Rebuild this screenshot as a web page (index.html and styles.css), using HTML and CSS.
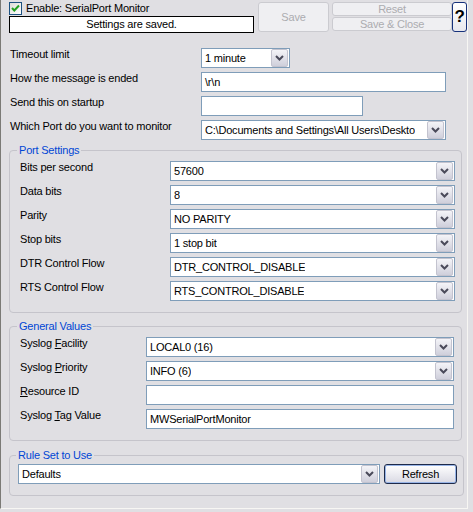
FILE: index.html
```html
<!DOCTYPE html>
<html>
<head>
<meta charset="utf-8">
<link rel="stylesheet" href="styles.css">
</head>
<body>
<div class="frame">
  <div class="top">
    <div class="status-col">
      <label class="check-row">
        <span class="checkbox">
          <svg width="11" height="11" viewBox="0 0 11 11"><path d="M2 5 L4.3 7.5 L9 2.5" fill="none" stroke="#21a121" stroke-width="2"/></svg>
        </span>
        <span>Enable: SerialPort Monitor</span>
      </label>
      <div class="status">Settings are saved.</div>
    </div>
    <div class="btn btn-disabled btn-save">Save</div>
    <div class="btn-stack">
      <div class="btn btn-disabled btn-small">Reset</div>
      <div class="btn btn-disabled btn-small">Save &amp; Close</div>
    </div>
    <div class="btn btn-help">?</div>
  </div>

  <div class="main">
    <div class="row row-top">
      <span class="label label-top">Timeout limit</span>
      <div class="combo w-timeout"><span class="val">1 minute</span><span class="drop"><svg width="9" height="6" viewBox="0 0 9 6"><path d="M1 1 L4.5 4.5 L8 1" fill="none" stroke="#4a4a5a" stroke-width="2"/></svg></span></div>
    </div>
    <div class="row row-top">
      <span class="label label-top">How the message is ended</span>
      <div class="field w-wide">\r\n</div>
    </div>
    <div class="row row-top">
      <span class="label label-top">Send this on startup</span>
      <div class="field w-startup"></div>
    </div>
    <div class="row row-top">
      <span class="label label-top">Which Port do you want to monitor</span>
      <div class="combo w-wide"><span class="val">C:\Documents and Settings\All Users\Deskto</span><span class="drop"><svg width="9" height="6" viewBox="0 0 9 6"><path d="M1 1 L4.5 4.5 L8 1" fill="none" stroke="#4a4a5a" stroke-width="2"/></svg></span></div>
    </div>

    <fieldset class="group group-port">
      <legend>Port Settings</legend>
      <div class="row">
        <span class="label label-port">Bits per second</span>
        <div class="combo w-port"><span class="val">57600</span><span class="drop"><svg width="9" height="6" viewBox="0 0 9 6"><path d="M1 1 L4.5 4.5 L8 1" fill="none" stroke="#4a4a5a" stroke-width="2"/></svg></span></div>
      </div>
      <div class="row">
        <span class="label label-port">Data bits</span>
        <div class="combo w-port"><span class="val">8</span><span class="drop"><svg width="9" height="6" viewBox="0 0 9 6"><path d="M1 1 L4.5 4.5 L8 1" fill="none" stroke="#4a4a5a" stroke-width="2"/></svg></span></div>
      </div>
      <div class="row">
        <span class="label label-port">Parity</span>
        <div class="combo w-port"><span class="val">NO PARITY</span><span class="drop"><svg width="9" height="6" viewBox="0 0 9 6"><path d="M1 1 L4.5 4.5 L8 1" fill="none" stroke="#4a4a5a" stroke-width="2"/></svg></span></div>
      </div>
      <div class="row">
        <span class="label label-port">Stop bits</span>
        <div class="combo w-port"><span class="val">1 stop bit</span><span class="drop"><svg width="9" height="6" viewBox="0 0 9 6"><path d="M1 1 L4.5 4.5 L8 1" fill="none" stroke="#4a4a5a" stroke-width="2"/></svg></span></div>
      </div>
      <div class="row">
        <span class="label label-port">DTR Control Flow</span>
        <div class="combo w-port"><span class="val">DTR_CONTROL_DISABLE</span><span class="drop"><svg width="9" height="6" viewBox="0 0 9 6"><path d="M1 1 L4.5 4.5 L8 1" fill="none" stroke="#4a4a5a" stroke-width="2"/></svg></span></div>
      </div>
      <div class="row">
        <span class="label label-port">RTS Control Flow</span>
        <div class="combo w-port"><span class="val">RTS_CONTROL_DISABLE</span><span class="drop"><svg width="9" height="6" viewBox="0 0 9 6"><path d="M1 1 L4.5 4.5 L8 1" fill="none" stroke="#4a4a5a" stroke-width="2"/></svg></span></div>
      </div>
    </fieldset>

    <fieldset class="group group-general">
      <legend>General Values</legend>
      <div class="row">
        <span class="label label-gen">Syslog <u>F</u>acility</span>
        <div class="combo w-gen"><span class="val">LOCAL0 (16)</span><span class="drop"><svg width="9" height="6" viewBox="0 0 9 6"><path d="M1 1 L4.5 4.5 L8 1" fill="none" stroke="#4a4a5a" stroke-width="2"/></svg></span></div>
      </div>
      <div class="row">
        <span class="label label-gen">Syslog <u>P</u>riority</span>
        <div class="combo w-gen"><span class="val">INFO (6)</span><span class="drop"><svg width="9" height="6" viewBox="0 0 9 6"><path d="M1 1 L4.5 4.5 L8 1" fill="none" stroke="#4a4a5a" stroke-width="2"/></svg></span></div>
      </div>
      <div class="row">
        <span class="label label-gen"><u>R</u>esource ID</span>
        <div class="field w-gen"></div>
      </div>
      <div class="row">
        <span class="label label-gen">Syslog <u>T</u>ag Value</span>
        <div class="field w-gen">MWSerialPortMonitor</div>
      </div>
    </fieldset>

    <fieldset class="group group-rule">
      <legend>Rule Set to Use</legend>
      <div class="row">
        <div class="combo w-rule"><span class="val">Defaults</span><span class="drop"><svg width="9" height="6" viewBox="0 0 9 6"><path d="M1 1 L4.5 4.5 L8 1" fill="none" stroke="#4a4a5a" stroke-width="2"/></svg></span></div>
        <div class="btn btn-refresh">Refresh</div>
      </div>
    </fieldset>
  </div>
</div>
</body>
</html>
```

FILE: styles.css
```css
* { box-sizing: border-box; }

html, body {
  margin: 0;
  padding: 0;
  background: #e0dfe3;
}

body {
  width: 473px;
  height: 512px;
  font-family: "Liberation Sans", Arial, sans-serif;
  font-size: 11px;
  letter-spacing: -0.2px;
  color: #000;
  overflow: hidden;
}

.frame {
  width: 468px;
  height: 509px;
  border-left: 1px solid #7b7a76;
  border-right: 1px solid #f7f6f3;
  border-bottom: 1px solid #f7f6f3;
}

/* ---------- top bar ---------- */
.top {
  display: flex;
  align-items: flex-start;
  height: 33px;
}

.status-col {
  margin-left: 8px;
  width: 245px;
  display: flex;
  flex-direction: column;
}

.check-row {
  display: flex;
  align-items: center;
  gap: 4px;
  height: 16px;
  padding-top: 1px;
  line-height: 13px;
}

.checkbox {
  width: 13px;
  height: 13px;
  border: 1px solid #1c5180;
  background: linear-gradient(135deg, #dcdcd7, #ffffff);
  display: flex;
  align-items: center;
  justify-content: center;
}

.status {
  height: 17px;
  border: 1px solid #000;
  background: #fff;
  text-align: center;
  line-height: 15px;
}

.btn {
  display: flex;
  align-items: center;
  justify-content: center;
  border-radius: 3px;
}

.btn-disabled {
  border: 1px solid #cbcbd0;
  background: #efeff2;
  color: #acacb0;
}

.btn-save {
  margin-left: 4px;
  margin-top: 2px;
  width: 71px;
  height: 30px;
}

.btn-stack {
  margin-left: 3px;
  margin-top: 2px;
  width: 120px;
  display: flex;
  flex-direction: column;
  gap: 1px;
}

.btn-small {
  height: 14px;
  line-height: 12px;
}

.btn-help {
  margin-top: 2px;
  width: 15px;
  height: 30px;
  border: 1px solid #16317b;
  background: linear-gradient(#ffffff, #e8e8ee);
  font-weight: bold;
  font-size: 17px;
}

/* ---------- main form ---------- */
.main {
  padding: 15px 0 0 8px;
}

.row {
  display: flex;
  align-items: flex-start;
  height: 20px;
}

.row + .row { margin-top: 4px; }

.label {
  flex: none;
  line-height: 13px;
  padding-left: 1px;
}

.label-top { width: 192px; }
.label-port { width: 151px; }
.label-gen { width: 127px; }

.field, .combo {
  height: 20px;
  border: 1px solid #7f9db9;
  background: #fff;
  line-height: 18px;
  padding-left: 3px;
  white-space: nowrap;
  overflow: hidden;
}

.combo {
  display: flex;
  justify-content: space-between;
  padding-right: 1px;
}

.combo .val { overflow: hidden; }

.drop {
  flex: none;
  width: 17px;
  height: 18px;
  border: 1px solid #c3c3cf;
  border-radius: 2px;
  background: linear-gradient(#f4f4f8, #cfcfdb);
  display: flex;
  align-items: center;
  justify-content: center;
}

.w-timeout { width: 89px; }
.w-wide { width: 245px; }
.w-startup { width: 162px; }
.w-port { width: 285px; }
.w-gen { width: 308px; }
.w-rule { width: 362px; }

/* ---------- group boxes ---------- */
.group {
  width: 453px;
  margin: 4px 0 0 0;
  border: 1px solid #c5c4cb;
  border-radius: 4px;
  padding: 5px 6px 11px 9px;
}

.group legend {
  color: #0046d5;
  line-height: 12px;
  padding: 0 2px;
  margin-left: -2px;
}

.group-general { margin-top: 7px; }
.group-rule { margin-top: 8px; padding-top: 3px; padding-left: 8px; }

.btn-refresh {
  margin-left: 4px;
  width: 73px;
  height: 20px;
  border: 1px solid #1d2a4a;
  box-shadow: inset 0 0 0 1px #98b4e6;
  background: linear-gradient(#ffffff, #d9d9e3);
  border-radius: 3px;
}
```
